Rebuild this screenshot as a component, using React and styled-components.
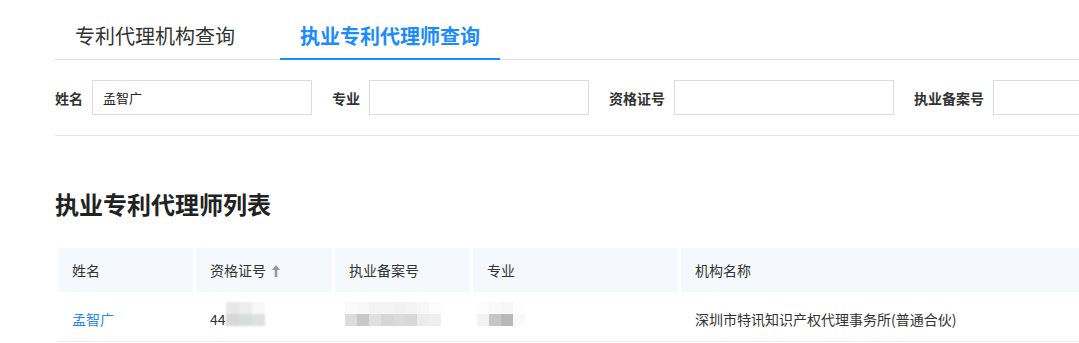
import styled, { createGlobalStyle } from 'styled-components';

const GlobalStyle = createGlobalStyle`
  body {
    margin: 0;
    background: #fff;
    overflow: hidden;
    font-family: "Noto Sans CJK SC", "Microsoft YaHei", sans-serif;
    color: #333;
  }
`;

const Page = styled.div`
  width: 1250px;
  padding-left: 55px;
`;

const TabBar = styled.nav`
  display: flex;
  gap: 25px;
  border-bottom: 1px solid #dddddd;
`;

const Tab = styled.div`
  padding: 22px 20px 8px;
  font-size: 20px;
  line-height: 28px;
  margin-bottom: -1px;
  cursor: pointer;
  color: ${props => (props.$active ? '#1a8cff' : '#333')};
  font-weight: ${props => (props.$active ? 700 : 400)};
  border-bottom: 2px solid ${props => (props.$active ? '#1a8cff' : 'transparent')};
`;

const FilterBar = styled.div`
  display: flex;
  align-items: center;
  padding: 20px 0;
  border-bottom: 1px solid #e6e6e6;
`;

const Field = styled.label`
  display: flex;
  align-items: center;
  gap: 9px;
  margin-right: 20px;
`;

const FieldLabel = styled.span`
  font-size: 14px;
  font-weight: 700;
  color: #333;
  white-space: nowrap;
`;

const Input = styled.input`
  box-sizing: border-box;
  width: 220px;
  height: 35px;
  border: 1px solid #dcdcdc;
  padding: 0 10px;
  font-family: inherit;
  font-size: 13px;
  color: #222;
  outline: none;
`;

const Heading = styled.h2`
  margin: 52px 0 28px;
  font-size: 24px;
  line-height: 32px;
  font-weight: 700;
  color: #222;
`;

const Table = styled.table`
  margin-left: 3px;
  width: 1180px;
  table-layout: fixed;
  border-collapse: separate;
  border-spacing: 0;
`;

const Th = styled.th`
  background: #f5f8fc;
  background-clip: padding-box;
  border-right: 3px solid transparent;
  padding: 12px 14px;
  font-size: 14px;
  line-height: 20px;
  font-weight: 400;
  color: #333;
  text-align: left;
  white-space: nowrap;
`;

const Td = styled.td`
  padding: 17px 14px 12px;
  font-size: 14px;
  line-height: 20px;
  color: #333;
  border-bottom: 1px solid #e8edf3;
  white-space: nowrap;
`;

const NameLink = styled.a`
  color: #2b88ee;
  text-decoration: none;
`;

const SortIcon = styled.svg`
  margin-left: 6px;
  vertical-align: -1px;
`;

const Mosaic = styled.span`
  display: inline-grid;
  grid-template-columns: repeat(${props => props.$cols}, ${props => props.$size}px);
  grid-auto-rows: ${props => props.$row}px;
  vertical-align: top;
  margin-top: -7px;
  margin-left: ${props => props.$shift || 0}px;
  filter: ${props => (props.$soft ? 'blur(1.2px)' : 'none')};
`;

const Tile = styled.span`
  background: ${props => props.$c};
`;

const Pixelated = ({ rows, size = 12, row = 12, shift, soft }) => (
  <Mosaic $cols={rows[0].length} $size={size} $row={row} $shift={shift} $soft={soft}>
    {rows.flat().map((c, i) => (
      <Tile key={i} $c={c} />
    ))}
  </Mosaic>
);

const certBlur = [
  ['#e8e8e8', '#ededed', '#f8f8f8'],
  ['#d8d8d8', '#dadcdc', '#dfe1e1'],
];

const recordBlur = [
  ['#fafafa', '#f8f8f8', '#f4f4f4', '#f4f4f4', '#f2f2f2', '#f4f4f4', '#f8f8f8', '#fcfcfc'],
  ['#dcdcdc', '#c8c8c8', '#e0e0e0', '#d6d6d6', '#dadad8', '#d6d8da', '#ececec', '#efefef'],
];

const majorBlur = [
  ['#fdfdfd', '#fafafa', '#f7f7f7', '#fdfdfd'],
  ['#f2f2f2', '#c6c6c6', '#b8b8b8', '#f8f9fb'],
];

const filters = [
  { label: '姓名', value: '孟智广' },
  { label: '专业', value: '' },
  { label: '资格证号', value: '' },
  { label: '执业备案号', value: '' },
];

export default function App() {
  return (
    <>
      <GlobalStyle />
      <Page>
        <TabBar>
          <Tab>专利代理机构查询</Tab>
          <Tab $active>执业专利代理师查询</Tab>
        </TabBar>

        <FilterBar>
          {filters.map(f => (
            <Field key={f.label}>
              <FieldLabel>{f.label}</FieldLabel>
              <Input defaultValue={f.value} />
            </Field>
          ))}
        </FilterBar>

        <Heading>执业专利代理师列表</Heading>

        <Table>
          <colgroup>
            <col style={{ width: 138 }} />
            <col style={{ width: 139 }} />
            <col style={{ width: 138 }} />
            <col style={{ width: 208 }} />
            <col />
          </colgroup>
          <thead>
            <tr>
              <Th>姓名</Th>
              <Th>
                资格证号
                <SortIcon width="8" height="12" viewBox="0 0 8 12">
                  <path d="M4 0 L8 5 H5.3 V12 H2.7 V5 H0 Z" fill="#999" />
                </SortIcon>
              </Th>
              <Th>执业备案号</Th>
              <Th>专业</Th>
              <Th>机构名称</Th>
            </tr>
          </thead>
          <tbody>
            <tr>
              <Td>
                <NameLink href="#">孟智广</NameLink>
              </Td>
              <Td>
                44
                <Pixelated rows={certBlur} size={13} row={12} soft />
              </Td>
              <Td>
                <Pixelated rows={recordBlur} shift={-4} />
              </Td>
              <Td>
                <Pixelated rows={majorBlur} shift={-10} />
              </Td>
              <Td>深圳市特讯知识产权代理事务所(普通合伙)</Td>
            </tr>
          </tbody>
        </Table>
      </Page>
    </>
  );
}
